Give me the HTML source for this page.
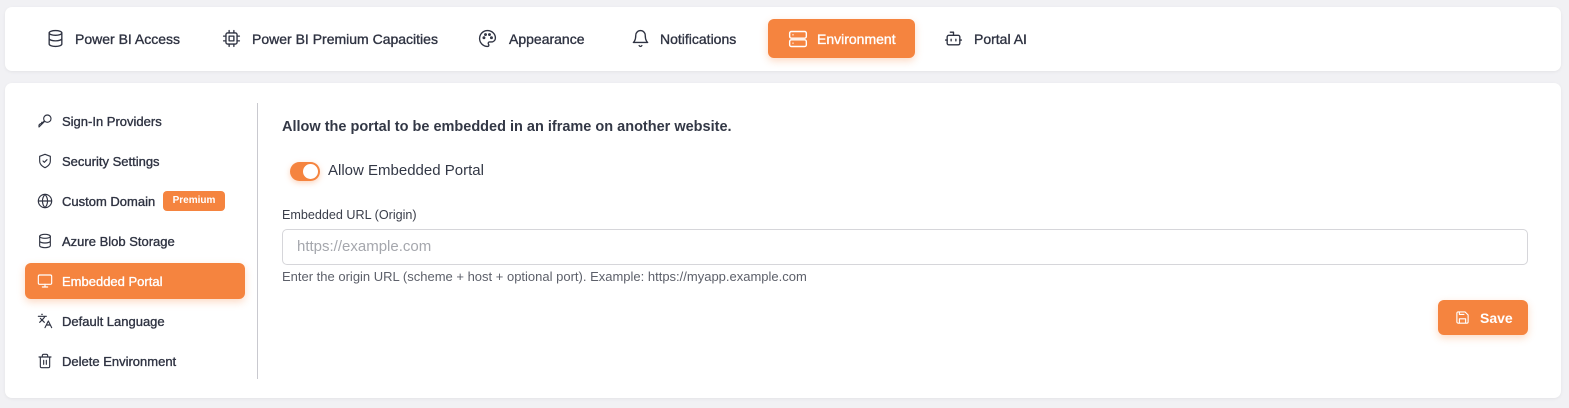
<!DOCTYPE html>
<html><head><meta charset="utf-8"><style>
*{box-sizing:border-box;margin:0;padding:0}
body{width:1569px;height:408px;background:#f1f1f4;font-family:"Liberation Sans",sans-serif;color:#2f3342;position:relative;overflow:hidden}
.card{position:absolute;left:5px;width:1556px;background:#fff;border-radius:7px;box-shadow:0 1px 3px rgba(0,0,0,.06)}
.ic{position:absolute;fill:none;stroke:currentColor;stroke-width:1.7;stroke-linecap:round;stroke-linejoin:round;color:#2f3342}
.tt{position:absolute;top:31px;font-size:14px;color:#2f3342;-webkit-text-stroke:0.35px currentColor;white-space:nowrap}
.st{position:absolute;left:62px;font-size:13px;color:#2f3342;-webkit-text-stroke:0.35px currentColor;white-space:nowrap}
.badge{position:absolute;left:163px;top:191px;width:62px;height:20px;background:#f5843f;color:#fff;font-size:10px;font-weight:700;border-radius:4px;text-align:center;line-height:20px}
</style></head><body>
<div class="card" style="top:7px;height:64px"></div>
<div class="card" style="top:83px;height:315px"></div>

<svg class="ic" style="left:46px;top:29px" width="19" height="19" viewBox="0 0 24 24"><ellipse cx="12" cy="5" rx="8" ry="3"/><path d="M4 5v14c0 1.7 3.6 3 8 3s8-1.3 8-3V5M4 12c0 1.7 3.6 3 8 3s8-1.3 8-3"/></svg>
<div class="tt" style="left:75px">Power BI Access</div>
<svg class="ic" style="left:222px;top:29px" width="19" height="19" viewBox="0 0 24 24"><rect x="5" y="5" width="14" height="14" rx="2"/><rect x="9" y="9" width="6" height="6"/><path d="M9 2v3M15 2v3M9 19v3M15 19v3M2 9h3M2 15h3M19 9h3M19 15h3"/></svg>
<div class="tt" style="left:252px">Power BI Premium Capacities</div>
<svg class="ic" style="left:478px;top:29px" width="19" height="19" viewBox="0 0 24 24"><path d="M12 2a10 10 0 0 0 0 20c1.1 0 1.7-.8 1.7-1.7 0-.4-.2-.8-.4-1.1-.3-.3-.4-.7-.4-1.1 0-.9.8-1.7 1.7-1.7H17a5 5 0 0 0 5-5C22 6 17.5 2 12 2z"/><circle cx="7.5" cy="11" r="1"/><circle cx="9.5" cy="7" r="1"/><circle cx="14.5" cy="7" r="1"/><circle cx="17" cy="11" r="1"/></svg>
<div class="tt" style="left:509px">Appearance</div>
<svg class="ic" style="left:631px;top:29px" width="19" height="19" viewBox="0 0 24 24"><path d="M6 8a6 6 0 0 1 12 0c0 7 3 9 3 9H3s3-2 3-9M10.3 21a1.9 1.9 0 0 0 3.4 0"/></svg>
<div class="tt" style="left:660px">Notifications</div>
<div style="position:absolute;left:768px;top:19px;width:147px;height:39px;background:#f5843f;border-radius:6px;box-shadow:0 3px 8px rgba(245,132,63,.3)"></div>
<svg class="ic" style="left:788px;top:29px;color:#fff" width="20" height="20" viewBox="0 0 24 24"><rect x="2" y="3" width="20" height="8" rx="2"/><rect x="2" y="13" width="20" height="8" rx="2"/><path d="M6 7h.01M6 17h.01"/></svg>
<div class="tt" style="left:817px;color:#fff">Environment</div>
<svg class="ic" style="left:944px;top:29px" width="19" height="19" viewBox="0 0 24 24"><rect x="4" y="8" width="16" height="12" rx="2"/><path d="M12 8V4H8M2 14h2M20 14h2M15 13v2M9 13v2"/></svg>
<div class="tt" style="left:974px">Portal AI</div>

<div style="position:absolute;left:25px;top:263px;width:220px;height:36px;background:#f5843f;border-radius:6px;box-shadow:0 3px 8px rgba(245,132,63,.3)"></div>
<svg class="ic" style="left:37px;top:113px" width="16" height="16" viewBox="0 0 24 24"><circle cx="15.5" cy="8.5" r="5.5"/><path d="M11.5 12.5 3 21v-3l2-2h2v-2h2l2-2"/></svg>
<div class="st" style="top:114px">Sign-In Providers</div>
<svg class="ic" style="left:37px;top:153px" width="16" height="16" viewBox="0 0 24 24"><path d="M12 22s8-3 8-10V5l-8-3-8 3v7c0 7 8 10 8 10z"/><path d="m9 12 2 2 4-4"/></svg>
<div class="st" style="top:154px">Security Settings</div>
<svg class="ic" style="left:37px;top:193px" width="16" height="16" viewBox="0 0 24 24"><circle cx="12" cy="12" r="10"/><path d="M2 12h20M12 2a15 15 0 0 1 0 20M12 2a15 15 0 0 0 0 20"/></svg>
<div class="st" style="top:194px">Custom Domain</div>
<div class="badge">Premium</div>
<svg class="ic" style="left:37px;top:233px" width="16" height="16" viewBox="0 0 24 24"><ellipse cx="12" cy="5" rx="8" ry="3"/><path d="M4 5v14c0 1.7 3.6 3 8 3s8-1.3 8-3V5M4 12c0 1.7 3.6 3 8 3s8-1.3 8-3"/></svg>
<div class="st" style="top:234px">Azure Blob Storage</div>
<svg class="ic" style="left:37px;top:273px;color:#fff" width="16" height="16" viewBox="0 0 24 24"><rect x="2" y="3" width="20" height="14" rx="2"/><path d="M8 21h8M12 17v4"/></svg>
<div class="st" style="top:274px;color:#fff">Embedded Portal</div>
<svg class="ic" style="left:37px;top:313px" width="16" height="16" viewBox="0 0 24 24"><path d="m5 8 6 6M4 14l6-6 2-3M2 5h12M7 2h1M22 22l-5-10-5 10M14 18h6"/></svg>
<div class="st" style="top:314px">Default Language</div>
<svg class="ic" style="left:37px;top:353px" width="16" height="16" viewBox="0 0 24 24"><path d="M3 6h18M19 6v14a2 2 0 0 1-2 2H7a2 2 0 0 1-2-2V6M8 6V4a2 2 0 0 1 2-2h4a2 2 0 0 1 2 2v2M10 11v6M14 11v6"/></svg>
<div class="st" style="top:354px">Delete Environment</div>

<div style="position:absolute;left:257px;top:103px;width:1px;height:276px;background:#c9c9cf"></div>

<div style="position:absolute;left:282px;top:119px;font-size:14.5px;font-weight:700;color:#333846;white-space:nowrap">Allow the portal to be embedded in an iframe on another website.</div>
<div style="position:absolute;left:290px;top:162px;width:30px;height:19px;border-radius:10px;background:#f5843f;box-shadow:0 2px 6px rgba(245,132,63,.35)"><div style="position:absolute;right:2px;top:2px;width:15px;height:15px;border-radius:50%;background:#fff"></div></div>
<div style="position:absolute;left:328px;top:162px;font-size:15px;color:#333846;white-space:nowrap">Allow Embedded Portal</div>
<div style="position:absolute;left:282px;top:208px;font-size:12.6px;color:#3a3e4a;white-space:nowrap">Embedded URL (Origin)</div>
<div style="position:absolute;left:282px;top:229px;width:1246px;height:36px;border:1px solid #d6d6da;border-radius:5px;font-size:15px;color:#a5a7ad;padding:8px 0 0 14px">https://example.com</div>
<div style="position:absolute;left:282px;top:269px;font-size:13px;color:#5d606a;white-space:nowrap">Enter the origin URL (scheme + host + optional port). Example: https://myapp.example.com</div>
<div style="position:absolute;left:1438px;top:300px;width:90px;height:35px;background:#f5843f;border-radius:6px;color:#fff;font-size:14px;font-weight:700;display:flex;align-items:center;padding-left:17px;box-shadow:0 3px 8px rgba(245,132,63,.3)"><svg viewBox="0 0 24 24" width="15" height="15" style="flex-shrink:0;margin-right:10px;fill:none;stroke:#fff;stroke-width:1.8;stroke-linejoin:round"><path d="M5 3h11l5 5v11a2 2 0 0 1-2 2H5a2 2 0 0 1-2-2V5a2 2 0 0 1 2-2z"/><path d="M7 21v-7h10v7M7 3v4h8"/></svg>Save</div>
</body></html>
